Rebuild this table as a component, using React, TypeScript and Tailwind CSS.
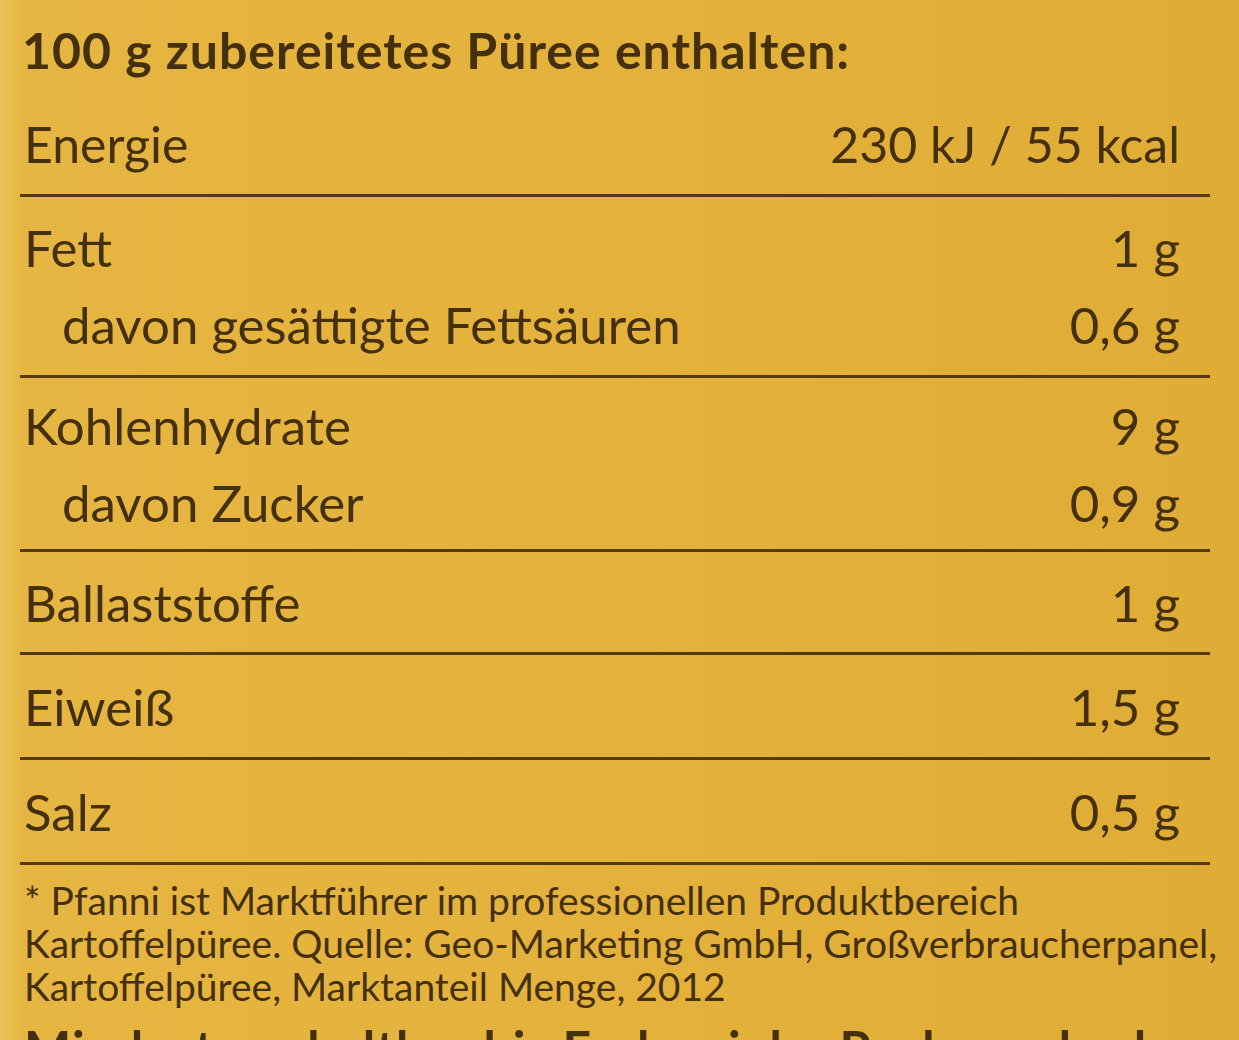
const rows: { group: { label: string; value: string; sub?: boolean }[]; h: string }[] = [
  { group: [{ label: "Fett", value: "1 g" }, { label: "davon gesättigte Fettsäuren", value: "0,6 g", sub: true }], h: "h-[181px]" },
  { group: [{ label: "Kohlenhydrate", value: "9 g" }, { label: "davon Zucker", value: "0,9 g", sub: true }], h: "h-[174px]" },
  { group: [{ label: "Ballaststoffe", value: "1 g" }], h: "h-[103px]" },
  { group: [{ label: "Eiweiß", value: "1,5 g" }], h: "h-[105px]" },
  { group: [{ label: "Salz", value: "0,5 g" }], h: "h-[105px]" },
];

export default function App() {
  return (
    <div className="w-[1239px] h-[1040px] overflow-hidden bg-[linear-gradient(90deg,#ecc25c_0px,#e6b642_22px,#e3b13a_60%,#dfac35_100%)] font-['Lato',sans-serif] text-[#45300d]">
      <div className="pl-[22px] pt-[22px] h-[95px] text-[50px] leading-[56px] font-bold tracking-[1px] whitespace-nowrap">
        100 g zubereitetes Püree enthalten:
      </div>

      <div className="ml-[20px] w-[1190px]">
        <div className="flex h-[102px] items-center justify-between border-b-[3px] border-[#553a0e] pl-[4px] pr-[30px] text-[50px]">
          <span>Energie</span>
          <span>230 kJ / 55 kcal</span>
        </div>

        {rows.map((r, i) => (
          <div
            key={i}
            className={`flex flex-col justify-center border-b-[3px] border-[#553a0e] pl-[4px] pr-[30px] text-[51px] leading-[77px] ${r.h}`}
          >
            {r.group.map((it) => (
              <div key={it.label} className="flex justify-between">
                <span className={it.sub ? "pl-[38px]" : ""}>{it.label}</span>
                <span>{it.value}</span>
              </div>
            ))}
          </div>
        ))}
      </div>

      <div className="pl-[24px] pt-[14px] text-[39px] leading-[43px] whitespace-nowrap">
        <div>* Pfanni ist Marktführer im professionellen Produktbereich</div>
        <div>Kartoffelpüree. Quelle: Geo-Marketing GmbH, Großverbraucherpanel,</div>
        <div>Kartoffelpüree, Marktanteil Menge, 2012</div>
      </div>

      <div className="pl-[24px] pt-[12px] text-[50px] leading-[56px] font-bold tracking-[1px] whitespace-nowrap">
        Mindestens haltbar bis Ende: siehe Packungsboden
      </div>
    </div>
  );
}
